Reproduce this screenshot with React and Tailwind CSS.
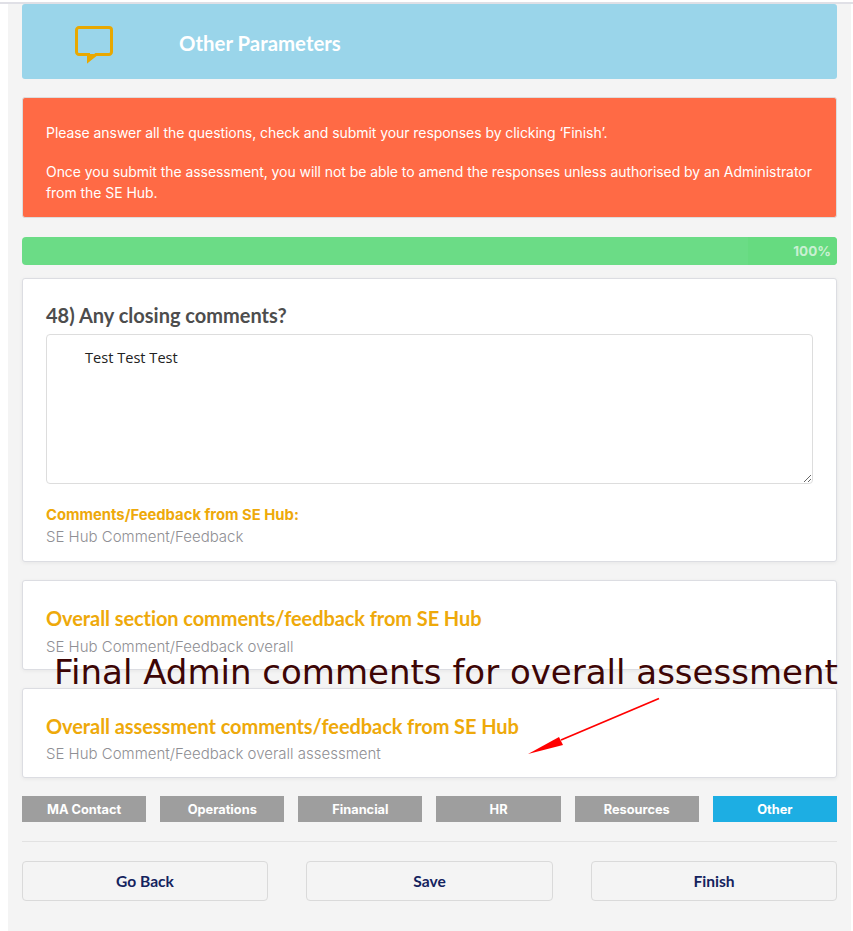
const body = "font-['Inter','Liberation_Sans',sans-serif]";
const lato = "font-['Lato','Liberation_Sans',sans-serif]";

function Card({ className = "", children }) {
  return (
    <div className={`rounded-[3px] border border-[#dcdde2] bg-white shadow-[0_1px_4px_rgba(0,0,0,0.06)] ${className}`}>
      {children}
    </div>
  );
}

function Tab({ label, active }) {
  return (
    <div className={`flex h-[26px] items-center justify-center pt-px text-[12.8px] font-bold text-white ${body} ${active ? "bg-[#1daee3]" : "bg-[#9e9e9e]"}`}>
      {label}
    </div>
  );
}

function Btn({ label, className = "w-[246px]" }) {
  return (
    <div className={`flex h-[40px] items-center justify-center rounded-[4px] border border-[#dadada] pt-[2px] text-[15.6px] font-bold text-[#14235e] ${lato} ${className}`}>
      {label}
    </div>
  );
}

export default function App() {
  return (
    <div className="relative h-[931px] w-[853px] overflow-hidden bg-white">
      <div className="mt-[2px] h-[2px] bg-[#e0e0e6]" />
      <div className="ml-[8px] mr-[2px] h-[927px] bg-[#f4f4f4] px-[14px]">
        <div className="flex h-[75px] items-center rounded-[3px] bg-[#9ad5ea] pl-[53px]">
          <svg width="40" height="40" viewBox="0 0 40 40" fill="none" className="mt-[9px] shrink-0">
            <path d="M4 1.5H34a2.5 2.5 0 0 1 2.5 2.5v22a2.5 2.5 0 0 1-2.5 2.5H21L13.5 34.5V28.5H4A2.5 2.5 0 0 1 1.5 26V4A2.5 2.5 0 0 1 4 1.5Z" stroke="#e9a800" strokeWidth="3" strokeLinejoin="miter" />
            <path d="M12 28H22L12 37.5Z" fill="#e9a800" />
          </svg>
          <div className={`ml-[64px] mt-[4px] text-[20.4px] font-bold text-white ${lato}`}>Other Parameters</div>
        </div>

        <div className={`mt-[18px] h-[121px] rounded-[3px] border border-[#dcdcdc] bg-[#ff6a45] px-[23px] pt-[24px] text-[14px] leading-[21px] tracking-[-0.06px] text-white ${body}`}>
          <p>Please answer all the questions, check and submit your responses by clicking ‘Finish’.</p>
          <p className="mt-[18px]">Once you submit the assessment, you will not be able to amend the responses unless authorised by an Administrator from the SE Hub.</p>
        </div>

        <div className="relative mt-[19px] flex h-[28px] items-center justify-end overflow-hidden rounded-[4px] bg-[#6bdc86] pr-[6px]">
          <div className="absolute inset-y-0 right-0 w-[89px] bg-[#66db80]" />
          <span className={`relative text-[13.5px] font-bold text-[#c9f0d2] ${body}`}>100%</span>
        </div>

        <Card className="mt-[13px] h-[284px] px-[23px] pt-[23px]">
          <div className={`text-[20px] font-bold leading-[26px] text-[#4d4d4d] ${lato}`}>48) Any closing comments?</div>
          <textarea
            readOnly
            defaultValue="Test Test Test"
            className="mt-[6px] block h-[150px] w-full rounded-[4px] border border-[#dddddd] bg-white pl-[38px] pt-[12px] font-['Open_Sans',sans-serif] text-[14.6px] leading-[20px] text-[#222222] outline-none"
          />
          <div className={`mt-[22px] text-[14.8px] font-bold leading-[18px] text-[#eea90a] ${body}`}>Comments/Feedback from SE Hub:</div>
          <div className={`mt-[3px] text-[15px] font-light leading-[20px] text-[#8f8f94] ${body}`}>SE Hub Comment/Feedback</div>
        </Card>

        <Card className="mt-[18px] h-[90px] px-[23px] pt-[24px]">
          <div className={`text-[20px] font-bold leading-[26px] tracking-[-0.08px] text-[#eea90a] ${lato}`}>Overall section comments/feedback from SE Hub</div>
          <div className={`mt-[6px] text-[15px] font-light leading-[20px] text-[#8f8f94] ${body}`}>SE Hub Comment/Feedback overall</div>
        </Card>

        <Card className="mt-[18px] h-[90px] px-[23px] pt-[24px]">
          <div className={`text-[20px] font-bold leading-[26px] tracking-[-0.08px] text-[#eea90a] ${lato}`}>Overall assessment comments/feedback from SE Hub</div>
          <div className={`mt-[5px] text-[15px] font-light leading-[20px] text-[#8f8f94] ${body}`}>SE Hub Comment/Feedback overall assessment</div>
        </Card>

        <div className="mt-[18px] grid grid-cols-6 gap-x-[14px]">
          <Tab label="MA Contact" />
          <Tab label="Operations" />
          <Tab label="Financial" />
          <Tab label="HR" />
          <Tab label="Resources" />
          <Tab label="Other" active />
        </div>

        <div className="mt-[19px] h-px bg-[#e2e2e2]" />

        <div className="mt-[19px] flex justify-between">
          <Btn label="Go Back" />
          <Btn label="Save" className="w-[247px]" />
          <Btn label="Finish" />
        </div>
      </div>

      <div className="absolute left-[54px] top-[650px] whitespace-nowrap font-['DejaVu_Sans',sans-serif] text-[34px] leading-[44px] text-[#3d0505]">
        Final Admin comments for overall assessment
      </div>

      <svg className="absolute left-[525px] top-[695px]" width="140" height="62" viewBox="0 0 140 62" fill="none">
        <path d="M134 3.5L36 45" stroke="#ff0000" strokeWidth="1.8" />
        <path d="M3 59L34 42L38 50Z" fill="#ff0000" />
      </svg>
    </div>
  );
}
